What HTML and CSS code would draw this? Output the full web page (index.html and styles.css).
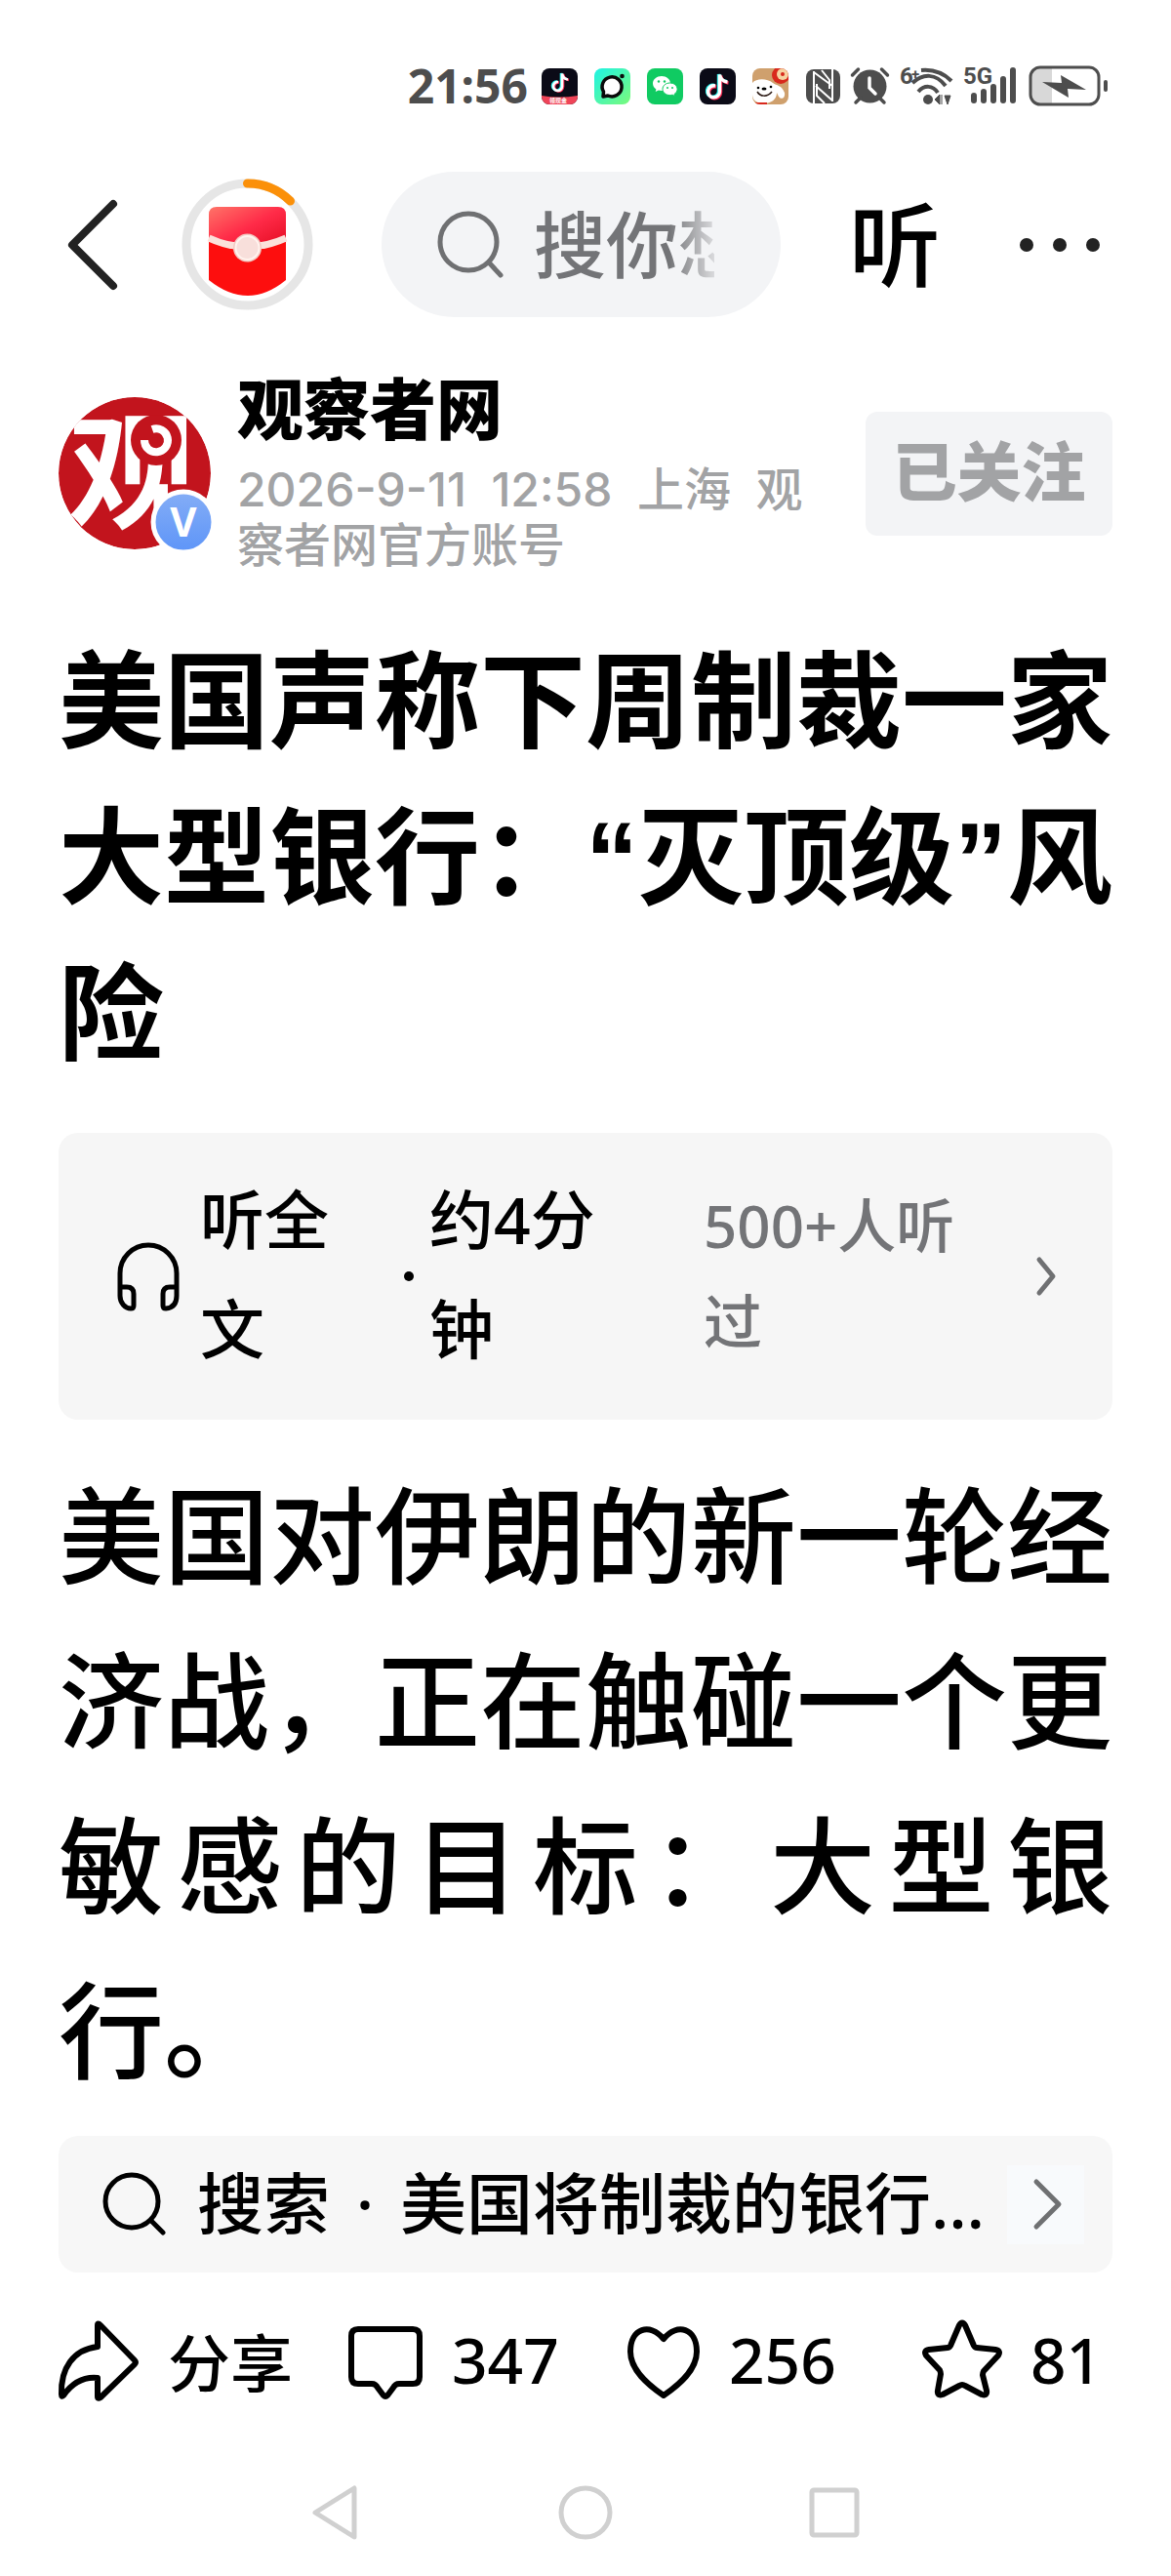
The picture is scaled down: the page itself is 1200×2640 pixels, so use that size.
FILE: index.html
```html
<!DOCTYPE html>
<html lang="zh-CN">
<head>
    <meta charset="UTF-8">
    <meta name="viewport" content="width=device-width, initial-scale=1.0">
    <title>美国声称下周制裁一家大型银行</title>
    <link rel="stylesheet" href="styles.css">
</head>
<body>
    <div class="status-bar">
        <span class="time">21:56</span>
        <div class="app-icons">
            <svg width="37" height="37" viewBox="0 0 37 37">
                <rect width="37" height="37" rx="8" fill="#0b0b17"/>
                <g fill="none" stroke-width="2.600">
                    <path d="M16 13.500a4.500 4.500 0 1 0 4 4.500V5c.8 4 3 5.500 6 6" stroke="#25f4ee"/>
                    <path d="M18 14.500a4.500 4.500 0 1 0 4 4.500V6c.8 4 3 5.500 6 6" stroke="#fe2c55"/>
                    <path d="M17 14a4.500 4.500 0 1 0 4 4.500V5.500c.8 4 3 5.500 6 6" stroke="#fff"/>
                </g>
                <path d="M0 28q18 3 37 0v1a8 8 0 0 1-8 8H8a8 8 0 0 1-8-8z" fill="#ef4458"/>
                <text x="8" y="35" font-size="6" font-weight="700" fill="#fff">领现金</text>
            </svg>
            <svg width="37" height="37" viewBox="0 0 37 37">
                <defs>
                    <linearGradient id="mint" x1="0" y1="0" x2="1" y2="1">
                        <stop offset="0" stop-color="#1df3e4"/>
                        <stop offset="1" stop-color="#7bfa7b"/>
                    </linearGradient>
                </defs>
                <rect width="37" height="37" rx="8" fill="url(#mint)"/>
                <path d="M9 29l.500-5A10 10 0 1 1 14 28z" fill="#fff" stroke="#0a0a0a" stroke-width="3.500" stroke-linejoin="round"/>
                <circle cx="28.500" cy="8" r="2.300" fill="#0a0a0a"/>
            </svg>
            <svg width="37" height="37" viewBox="0 0 37 37">
                <rect width="37" height="37" rx="8" fill="#10cb62"/>
                <path d="M15 8c-5 0-9 3.300-9 7.500 0 2.500 1.300 4.600 3.400 6L8.700 24l3.200-1.500c1 .3 2 .4 3.100.4 5 0 9-3.200 9-7.400S20 8 15 8z" fill="#fff"/>
                <path d="M23.500 15c-4.200 0-7.500 2.800-7.500 6.300s3.300 6.300 7.500 6.300c.9 0 1.800-.1 2.600-.4l2.700 1.300-.6-2.200c1.800-1.100 2.900-2.900 2.900-5 0-3.500-3.400-6.300-7.600-6.300z" fill="#fff" stroke="#10cb62"/>
                <g fill="#10cb62">
                    <circle cx="12" cy="13.500" r="1.200"/><circle cx="18" cy="13.500" r="1.200"/>
                    <circle cx="21" cy="20" r="1"/><circle cx="26" cy="20" r="1"/>
                </g>
            </svg>
            <svg width="37" height="37" viewBox="0 0 37 37">
                <rect width="37" height="37" rx="8" fill="#0b0b17"/>
                <g fill="none" stroke-width="3.400">
                    <path d="M15 17.500a6 6 0 1 0 4.500 6V6c1 5 4 7 8 7.500" stroke="#25f4ee"/>
                    <path d="M17 19a6 6 0 1 0 4.500 6V7.500c1 5 4 7 8 7.500" stroke="#fe2c55"/>
                    <path d="M16 18a6 6 0 1 0 4.500 6V6.500c1 5 4 7 8 7.500" stroke="#fff"/>
                </g>
            </svg>
            <svg width="37" height="37" viewBox="0 0 37 37">
                <defs>
                    <clipPath id="tile"><rect width="37" height="37" rx="8"/></clipPath>
                </defs>
                <g clip-path="url(#tile)">
                    <rect width="37" height="37" fill="#cfa06d"/>
                    <circle cx="29" cy="7" r="9" fill="#d8281c"/>
                    <circle cx="31" cy="6" r="6" fill="#f6d2a0"/>
                    <circle cx="31" cy="6" r="2" fill="#d8281c"/>
                    <path d="M0 15c4-5 15-5 21 0 4 3 9 2 12 10 1 5-3 8-6 4l-2-4c0 7-6 11-13 11C5 36 0 33 0 27z" fill="#fff"/>
                    <path d="M5 24c3 5 10 6 15 0" fill="none" stroke="#2b1a14" stroke-width="1.500"/>
                    <circle cx="6" cy="20" r="1.300"/><ellipse cx="12" cy="21" rx="2.500" ry="1.600"/><circle cx="19" cy="19" r="1.300"/>
                    <path d="M3 35h12v2H3z" fill="#d8281c"/>
                </g>
            </svg>
        </div>
        <div class="sys-icons">
            <svg width="35" height="37" viewBox="0 0 35 37">
                <rect y="1" width="35" height="35" rx="8" fill="#4d4d4d"/>
                <path d="M8 36V3M8 4l19 14M27 1v33M27 33L10 18M11 16v12l8 8M24 21v-9L16 2" fill="none" stroke="#fff" stroke-width="2"/>
            </svg>
            <svg width="39" height="38" viewBox="0 0 39 38">
                <circle cx="19.500" cy="19.500" r="17" fill="#4d4d4d"/>
                <path d="M1.500 8l6-6M37.500 8l-6-6M5 36l5-5M34 36l-5-5" stroke="#4d4d4d" stroke-width="3.500" stroke-linecap="round"/>
                <path d="M19 11v10l6 6" fill="none" stroke="#fff" stroke-width="3.500" stroke-linecap="round"/>
            </svg>
            <svg class="signal" width="54" height="40" viewBox="0 0 54 40">
                <text x="0" y="18" font-size="24" font-weight="700" fill="#4d4d4d">6</text>
                <text x="12" y="13" font-size="15" font-weight="700" fill="#4d4d4d">+</text>
                <g fill="none" stroke="#4d4d4d" stroke-width="4">
                    <path d="M22 4c11-1 22 2 31 11M13 17c11-10 24-10 34 3M19 26c6-7 15-7 20 1"/>
                </g>
                <circle cx="29" cy="34" r="5" fill="#4d4d4d"/>
                <path d="M36 34l5-5v10zM43 29v10M46 30h6l-3 9z" fill="#4d4d4d" stroke="#4d4d4d"/>
            </svg>
            <svg class="signal" width="56" height="40" viewBox="0 0 56 40">
                <text x="0" y="18" font-size="24" font-weight="700" fill="#4d4d4d">5G</text>
                <path d="M11 30v5M21 26v9M31 21v14M41 13v22M51 4v31" stroke="#4d4d4d" stroke-width="6" stroke-linecap="round"/>
            </svg>
            <svg width="82" height="42" viewBox="0 0 82 42">
                <path d="M3 12a9 9 0 0 1 9-9h12v36H12a9 9 0 0 1-9-9z" fill="#d8d8d8"/>
                <rect x="2" y="2" width="70" height="38" rx="10" fill="none" stroke="#4d4d4d" stroke-width="3"/>
                <path d="M14 17l20 1-1-8 26 15-19-1 1 9z" fill="#4d4d4d"/>
                <path d="M79 17v8" stroke="#4d4d4d" stroke-width="4" stroke-linecap="round"/>
            </svg>
        </div>
    </div>

    <header class="top-bar">
        <button class="icon-btn" aria-label="返回">
            <svg width="50" height="96" viewBox="0 0 50 96">
                <path d="M46 6L4 48l42 42" fill="none" stroke="#222" stroke-width="8" stroke-linecap="round" stroke-linejoin="round"/>
            </svg>
        </button>
        <button class="icon-btn" aria-label="红包">
            <svg width="135" height="135" viewBox="0 0 135 135">
                <defs>
                    <linearGradient id="flap" x1="0" y1="0" x2="1" y2="1">
                        <stop offset="0" stop-color="#ff7468"/>
                        <stop offset=".5" stop-color="#ff2b48"/>
                        <stop offset="1" stop-color="#e30a20"/>
                    </linearGradient>
                </defs>
                <circle cx="67.500" cy="67.500" r="62.500" fill="none" stroke="#e6e6e6" stroke-width="9"/>
                <path d="M67.500 5a62.500 62.500 0 0 1 44 18" fill="none" stroke="#fb9009" stroke-width="9" stroke-linecap="round"/>
                <path d="M28 58v46q40 32 79 0V58z" fill="#fd0e0e"/>
                <path d="M28 37q0-8 8-8h63q8 0 8 8v24q-40 20-79 0z" fill="url(#flap)"/>
                <path d="M28 61q39 18 79 0" fill="none" stroke="#fbe1da" stroke-width="7"/>
                <circle cx="67.500" cy="71" r="14.500" fill="#f3c9c2"/>
                <circle cx="67.500" cy="71" r="12" fill="#f8dfdb" stroke="#fff3ee" stroke-width="2"/>
            </svg>
        </button>
        <label class="search-pill">
            <svg width="70" height="70" viewBox="0 0 70 70">
                <g fill="none" stroke="#6f7072" stroke-width="5" stroke-linecap="round">
                    <circle cx="33" cy="32" r="29"/>
                    <path d="M54 53l12 13"/>
                </g>
            </svg>
            <input type="text" placeholder="搜你想" aria-label="搜索">
        </label>
        <button class="listen-btn">听</button>
        <button class="icon-btn" aria-label="更多">
            <svg width="84" height="20" viewBox="0 0 84 20">
                <g fill="#222"><circle cx="8" cy="10" r="7"/><circle cx="42" cy="10" r="7"/><circle cx="76" cy="10" r="7"/></g>
            </svg>
        </button>
    </header>

    <main class="article">
        <div class="author">
            <svg class="avatar" width="162" height="162" viewBox="0 0 162 162">
                <defs>
                    <clipPath id="face"><circle cx="78" cy="81" r="78"/></clipPath>
                    <linearGradient id="vip" x1="0" y1="0" x2="0" y2="1">
                        <stop offset="0" stop-color="#84adf6"/>
                        <stop offset="1" stop-color="#5e95f8"/>
                    </linearGradient>
                </defs>
                <g clip-path="url(#face)">
                    <circle cx="78" cy="81" r="78" fill="#c2141d"/>
                    <text x="10" y="127" font-size="130" font-weight="700" fill="#fff">观</text>
                    <circle cx="100" cy="47" r="26" fill="#c2141d"/>
                    <path d="M88 47a12 12 0 1 0 8-11" fill="none" stroke="#fff" stroke-width="8"/>
                    <circle cx="99" cy="47" r="3" fill="#c2141d"/>
                </g>
                <circle cx="128" cy="131" r="31" fill="url(#vip)" stroke="#fff" stroke-width="5"/>
                <text x="128" y="146" font-size="42" font-weight="700" fill="#fff" text-anchor="middle">V</text>
            </svg>
            <div class="author-info">
                <div class="author-name">观察者网</div>
                <div class="author-meta">2026-9-11&nbsp; 12:58&nbsp; 上海&nbsp; 观察者网官方账号</div>
            </div>
            <button class="follow">已关注</button>
        </div>

        <h1 class="title">美国声称下周制裁一家大型银行：“灭顶级”风险</h1>

        <button class="listen-card">
            <svg width="64" height="70" viewBox="0 0 64 70">
                <path d="M3 46V32a29 29 0 0 1 58 0v14M3 46h7q7 0 7 7v12q0 3-3 3C8 68 3 62 3 55zM61 46h-7q-7 0-7 7v12q0 3 3 3 11-1 11-13z" fill="none" stroke="#000" stroke-width="5" stroke-linejoin="round"/>
            </svg>
            <span class="listen-title">听全文</span>
            <span class="dot"></span>
            <span class="listen-time">约4分钟</span>
            <span class="listen-count">500+人听过</span>
            <svg width="20" height="42" viewBox="0 0 20 42">
                <path d="M3 4l14 17L3 38" fill="none" stroke="#6f7072" stroke-width="5" stroke-linecap="round" stroke-linejoin="round"/>
            </svg>
        </button>

        <p class="content">美国对伊朗的新一轮经济战，正在触碰一个更敏感的目标：大型银行。</p>

        <a class="search-card" href="#">
            <svg width="66" height="66" viewBox="0 0 66 66">
                <g fill="none" stroke="#000" stroke-width="5" stroke-linecap="round">
                    <circle cx="30" cy="30" r="27"/>
                    <path d="M51 51l11 11"/>
                </g>
            </svg>
            <span class="search-text">搜索<span class="sep">·</span>美国将制裁的银行…</span>
            <span class="search-arrow">
                <svg width="32" height="54" viewBox="0 0 32 54">
                    <path d="M6 4l23 23L6 50" fill="none" stroke="#6f7072" stroke-width="5" stroke-linecap="round" stroke-linejoin="round"/>
                </svg>
            </span>
        </a>
    </main>

    <footer class="actions">
        <button class="action">
            <svg width="82" height="80" viewBox="0 0 82 80">
                <path d="M40 5q0-3 3 0l35 36q2 2 0 4L43 79q-3 2-3-1V59Q19 57 5 77q-2 2-2-1C2 49 15 30 40 27z" fill="none" stroke="#000" stroke-width="6" stroke-linejoin="round"/>
            </svg>
            <span>分享</span>
        </button>
        <button class="action">
            <svg width="76" height="80" viewBox="0 0 76 80">
                <path d="M10 9h56q7 0 7 7v42q0 7-7 7H52q-4 0-6 4l-6 8q-2 2-4 0l-6-8q-2-4-6-4H10q-7 0-7-7V16q0-7 7-7z" fill="none" stroke="#000" stroke-width="6" stroke-linejoin="round"/>
            </svg>
            <span>347</span>
        </button>
        <button class="action">
            <svg width="74" height="80" viewBox="0 0 74 80">
                <path d="M37 19C23 2 3 8 3 32c0 19 18 34 34 45 16-11 34-26 34-45C71 8 51 2 37 19z" fill="none" stroke="#000" stroke-width="6" stroke-linejoin="round"/>
            </svg>
            <span>256</span>
        </button>
        <button class="action">
            <svg width="80" height="80" viewBox="0 0 80 80">
                <path d="M37 5q3-5 6 0l9 21q1 2 3 2l19 2q6 1 3 6L62 52q-1 2-1 4l4 16q1 6-5 4l-17-9q-3-2-6 0l-17 9q-6 2-5-4l3-17q0-2-1-4L3 36q-3-5 3-6l19-2q2 0 3-2z" fill="none" stroke="#000" stroke-width="6" stroke-linejoin="round"/>
            </svg>
            <span>81</span>
        </button>
    </footer>

    <nav class="nav-bar">
        <button class="icon-btn" aria-label="返回键">
            <svg width="60" height="60" viewBox="0 0 60 60">
                <path d="M48 5v50L8 30z" fill="none" stroke="#d0d0d0" stroke-width="5" stroke-linejoin="round"/>
            </svg>
        </button>
        <button class="icon-btn" aria-label="主屏幕">
            <svg width="60" height="60" viewBox="0 0 60 60">
                <circle cx="30" cy="30" r="25" fill="none" stroke="#d0d0d0" stroke-width="5"/>
            </svg>
        </button>
        <button class="icon-btn" aria-label="最近任务">
            <svg width="60" height="60" viewBox="0 0 60 60">
                <rect x="7" y="7" width="46" height="46" rx="2" fill="none" stroke="#d0d0d0" stroke-width="5"/>
            </svg>
        </button>
    </nav>
</body>
</html>
```
FILE: styles.css
```css
* {
    box-sizing: border-box;
}
body {
    margin: 0;
    background-color: #fff;
    color: #000;
    font-family: "Noto Sans", "Noto Sans CJK SC", sans-serif;
}
svg {
    display: block;
    flex-shrink: 0;
    overflow: visible;
}
button {
    border: none;
    padding: 0;
    background: none;
    color: inherit;
    font: inherit;
    text-align: left;
    cursor: pointer;
}

/* 状态栏 */
.status-bar {
    display: flex;
    justify-content: flex-end;
    align-items: center;
    padding: 52px 64px 0;
    height: 124px;
}
.time {
    margin-right: 14px;
    color: #4d4d4d;
    font-size: 48px;
    font-weight: 700;
    line-height: 72px;
}
.app-icons {
    display: flex;
    gap: 17px;
    margin-right: 18px;
}
.sys-icons {
    display: flex;
    align-items: center;
    gap: 11px;
}
.signal {
    font-family: Roboto, sans-serif;
}

/* 顶部栏 */
.top-bar {
    display: flex;
    align-items: center;
    gap: 70px;
    padding: 52px 72px 0 70px;
}
.top-bar .icon-btn:first-child {
    margin-right: -4px;
}
.search-pill {
    display: flex;
    flex: 1;
    align-items: center;
    gap: 30px;
    min-width: 0;
    height: 149px;
    padding: 0 68px 0 56px;
    border-radius: 75px;
    background-color: #f3f4f6;
}
.search-pill input {
    flex: 1;
    min-width: 0;
    padding: 0;
    border: none;
    outline: none;
    background: none;
    font-family: inherit;
    font-size: 74px;
    font-weight: 500;
    line-height: 100px;
    height: 100px;
    -webkit-mask-image: linear-gradient(to right, #000 75%, rgba(0, 0, 0, 0.2));
    mask-image: linear-gradient(to right, #000 75%, rgba(0, 0, 0, 0.2));
}
.search-pill input::placeholder {
    color: #737477;
    opacity: 1;
}
.listen-btn {
    width: 104px;
    font-size: 94px;
    font-weight: 500;
    line-height: 120px;
}

/* 文章 */
.article {
    padding: 58px 60px 0;
}
.author {
    display: flex;
    align-items: center;
}
.author-info {
    flex: 1;
    min-width: 0;
    margin: 0 40px 0 21px;
}
.author-name {
    margin-bottom: 18px;
    font-size: 68px;
    font-weight: 900;
    line-height: 72px;
}
.author-meta {
    color: #a2a3a5;
    font-family: Inter, "Noto Sans CJK SC", sans-serif;
    font-size: 48px;
    font-weight: 500;
    line-height: 57px;
}
.follow {
    width: 253px;
    height: 127px;
    padding-bottom: 12px;
    border-radius: 12px;
    background-color: #f3f4f6;
    color: #a2a3a5;
    font-size: 66px;
    font-weight: 900;
    text-align: center;
}
.title {
    margin: 54px 0 40px;
    font-family: "Liberation Sans", "Noto Sans CJK SC", sans-serif;
    font-size: 108px;
    font-weight: 700;
    line-height: 160px;
}
.listen-card {
    display: grid;
    grid-template-columns: 85px 209px 26px 281px 1fr auto;
    align-items: center;
    width: 100%;
    padding: 32px 58px 32px 60px;
    border-radius: 20px;
    background-color: #f6f6f6;
    font-weight: 500;
}
.listen-title,
.listen-time {
    max-width: 180px;
    padding-bottom: 6px;
    font-size: 66px;
    line-height: 112px;
}
.listen-count {
    max-width: 280px;
    padding-bottom: 6px;
    color: #737477;
    font-size: 60px;
    line-height: 98px;
}
.dot {
    width: 10px;
    height: 10px;
    border-radius: 50%;
    background-color: #000;
}
.content {
    margin: 34px 0 24px;
    font-size: 108px;
    font-weight: 500;
    line-height: 169px;
    text-align: justify;
}
.search-card {
    display: flex;
    align-items: center;
    height: 140px;
    padding: 0 29px 0 45px;
    border-radius: 20px;
    background-color: #f7f7f7;
    color: #000;
    font-size: 68px;
    font-weight: 500;
    text-decoration: none;
}
.search-text {
    flex: 1;
    min-width: 0;
    margin-left: 31px;
    padding-bottom: 10px;
    white-space: nowrap;
}
.sep {
    display: inline-block;
    width: 72px;
    text-align: center;
}
.search-arrow {
    display: flex;
    align-items: center;
    justify-content: center;
    width: 79px;
    height: 81px;
    background-color: #f8fafc;
}

/* 底部操作 */
.actions {
    display: grid;
    grid-template-columns: 297fr 286fr 303fr 194fr;
    padding: 34px 60px 0;
}
.action {
    display: flex;
    align-items: center;
    gap: 30px;
    height: 110px;
    font-size: 64px;
    font-weight: 500;
}

.nav-bar {
    display: flex;
    justify-content: center;
    gap: 195px;
    padding: 72px 0 32px;
}
```
